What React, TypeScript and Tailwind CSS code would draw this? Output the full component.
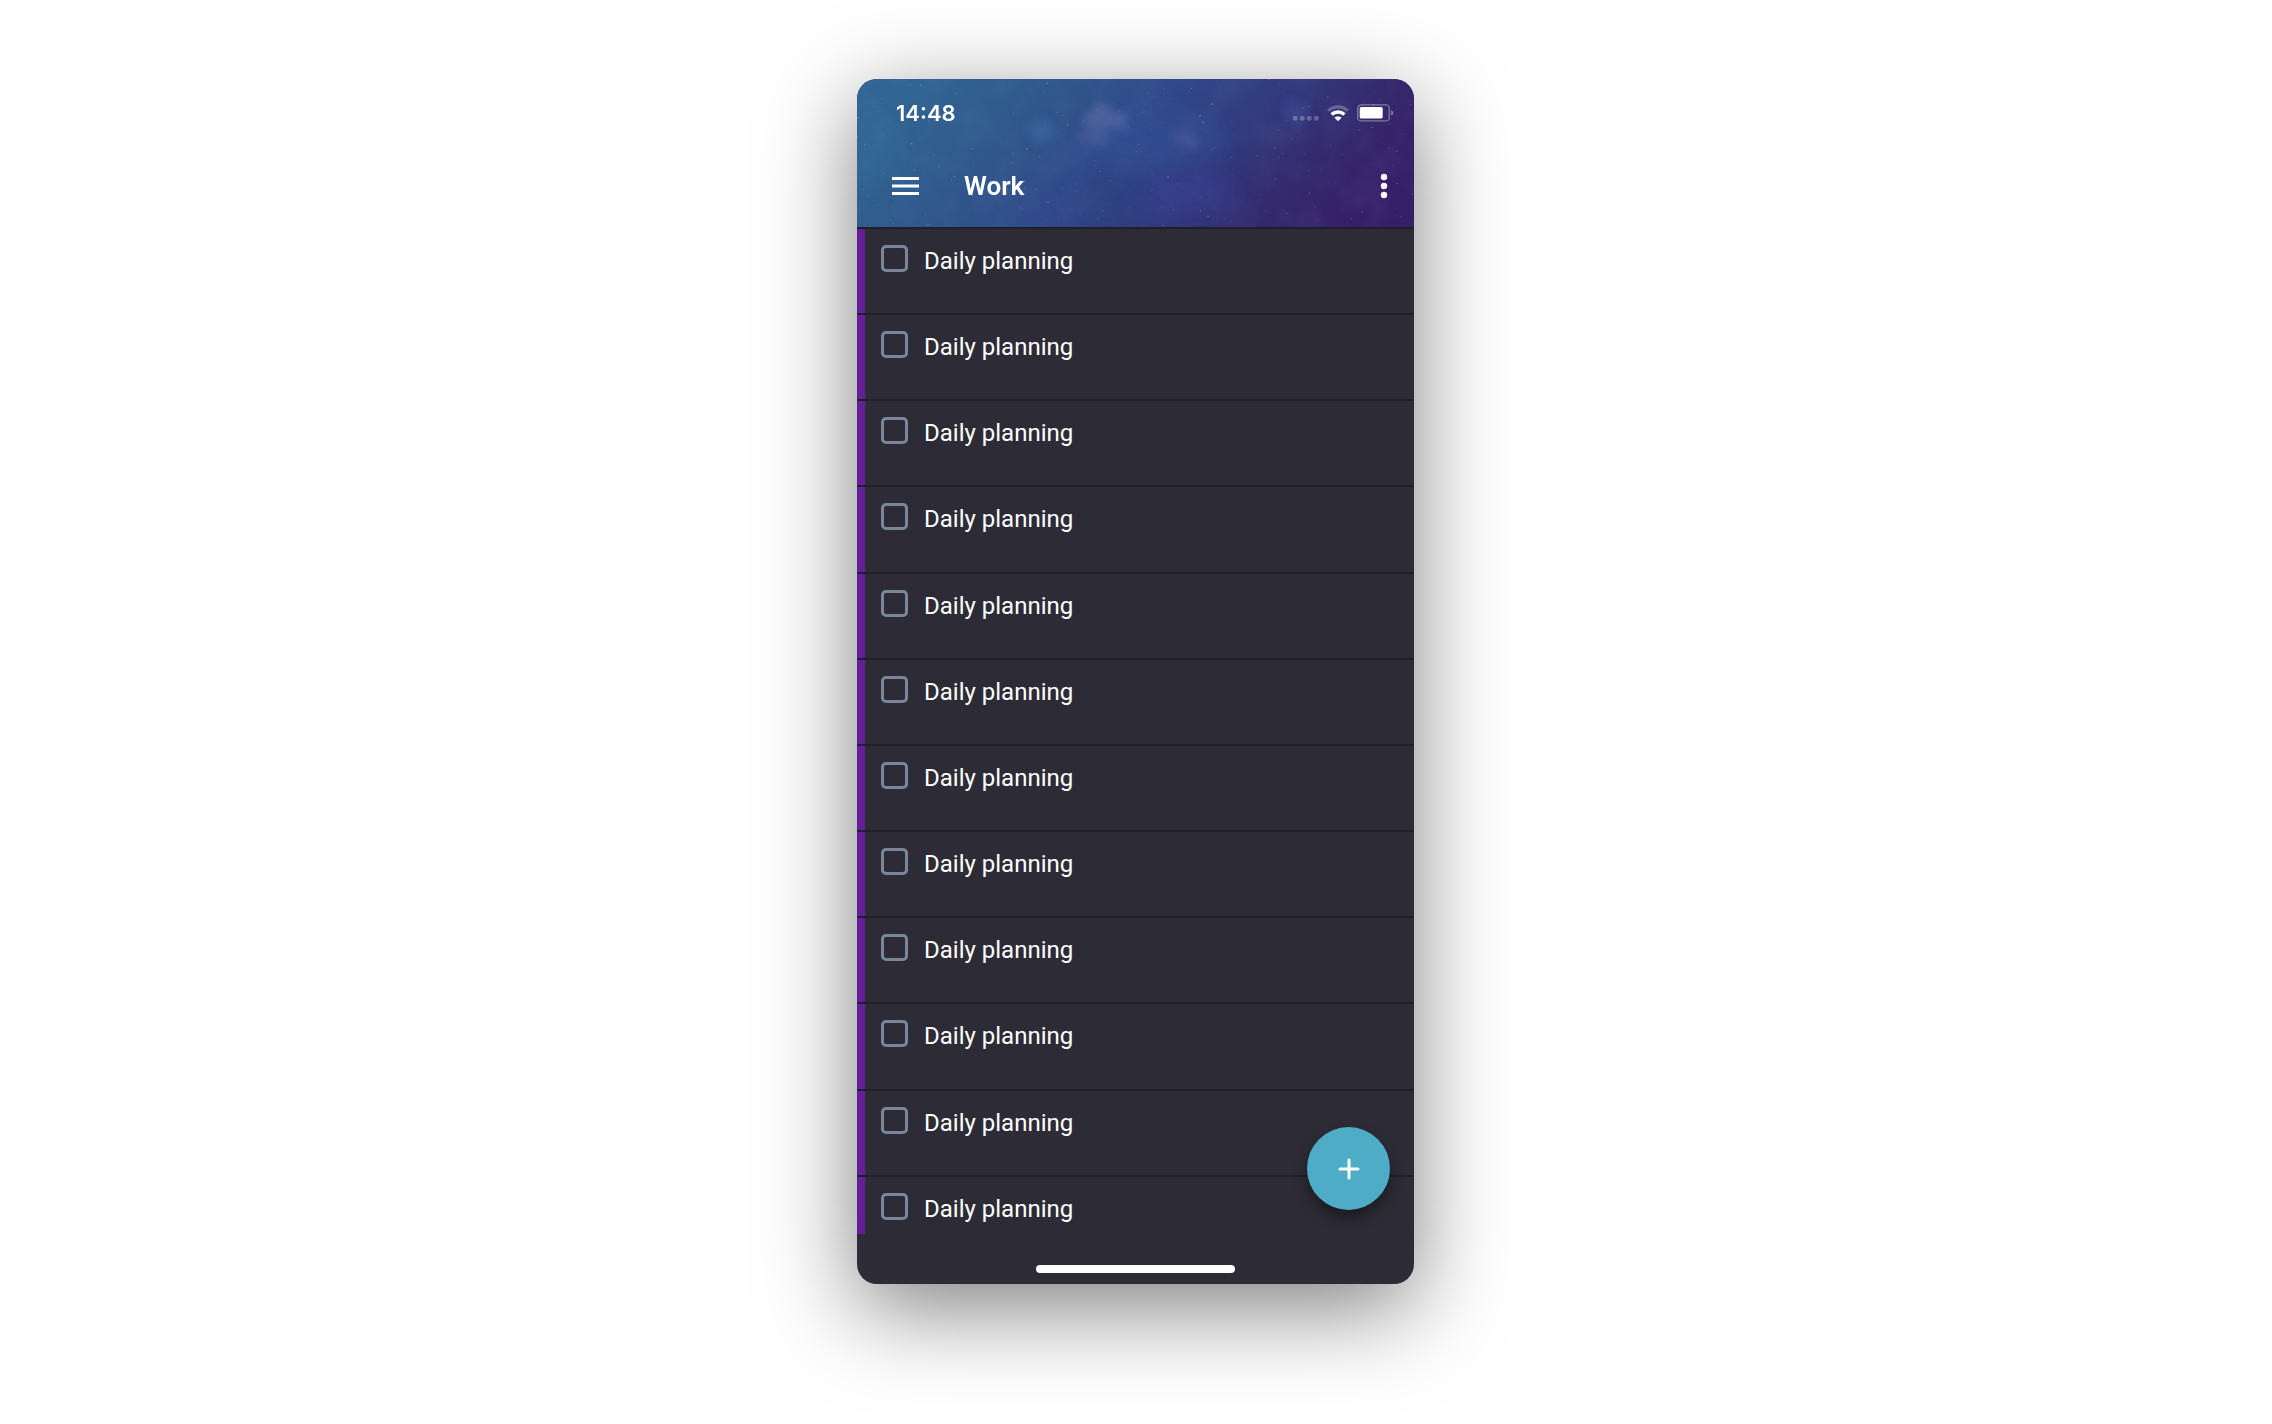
import { useState } from 'react'

type Task = { id: number; title: string; done: boolean }

const initialTasks: Task[] = Array.from({ length: 12 }, (_, i) => ({
  id: i + 1,
  title: 'Daily planning',
  done: false,
}))

// Fixed seed so the sky looks the same on every render
function makeStars(count: number) {
  let seed = 41
  const next = () => {
    seed = (seed * 16807) % 2147483647
    return seed / 2147483647
  }
  return Array.from({ length: count }, () => ({
    x: next() * 558,
    y: next() * 148,
    r: 0.4 + next() * 0.5,
    o: 0.08 + next() * next() * 0.45,
  }))
}

const stars = makeStars(330)

function NightSky() {
  return (
    <svg className="absolute inset-0 w-full h-full" viewBox="0 0 558 148" preserveAspectRatio="none" aria-hidden="true">
      <defs>
        <linearGradient id="sky" x1="0" y1="0.3" x2="1" y2="0.55">
          <stop offset="0" stopColor="#316694" />
          <stop offset="0.22" stopColor="#305b8d" />
          <stop offset="0.45" stopColor="#314b8a" />
          <stop offset="0.66" stopColor="#323b7e" />
          <stop offset="0.83" stopColor="#352a6e" />
          <stop offset="1" stopColor="#371e68" />
        </linearGradient>
        <filter id="soft" x="-50%" y="-50%" width="200%" height="200%">
          <feGaussianBlur stdDeviation="10" />
        </filter>
        <filter id="wisp" x="-60%" y="-60%" width="220%" height="220%">
          <feTurbulence type="fractalNoise" baseFrequency="0.08" numOctaves="5" seed="5" result="n" />
          <feDisplacementMap in="SourceGraphic" in2="n" scale="30" xChannelSelector="R" yChannelSelector="G" />
          <feGaussianBlur stdDeviation="4" />
        </filter>
        <filter id="grain" x="0" y="0" width="100%" height="100%">
          <feTurbulence type="fractalNoise" baseFrequency="0.03" numOctaves="5" seed="3" />
          <feColorMatrix values="0 0 0 0 0.22  0 0 0 0 0.32  0 0 0 0 0.65  1.6 0 0 0 -0.6" />
        </filter>
      </defs>
      <rect width="558" height="148" fill="url(#sky)" />
      <rect width="558" height="148" filter="url(#grain)" opacity="0.1" />
      <g filter="url(#soft)">
        <ellipse cx="20" cy="75" rx="24" ry="30" fill="#3374a0" opacity="0.25" />
        <ellipse cx="300" cy="60" rx="70" ry="28" fill="#33569c" opacity="0.4" />
        <ellipse cx="330" cy="115" rx="50" ry="22" fill="#3a4294" opacity="0.4" />
        <ellipse cx="250" cy="115" rx="36" ry="18" fill="#2a3f7c" opacity="0.4" />
      </g>
      <g filter="url(#wisp)">
        <ellipse cx="250" cy="40" rx="20" ry="12" fill="#7a80b8" opacity="0.36" />
        <ellipse cx="236" cy="60" rx="18" ry="9" fill="#6670ad" opacity="0.34" />
        <ellipse cx="187" cy="53" rx="14" ry="9" fill="#4a86bd" opacity="0.3" />
        <ellipse cx="333" cy="60" rx="12" ry="5" fill="#6c6bb0" opacity="0.4" />
        <ellipse cx="440" cy="32" rx="16" ry="9" fill="#4458a4" opacity="0.4" />
      </g>
      <g fill="#a9c6ee">
        {stars.map((s, i) => (
          <circle key={i} cx={s.x} cy={s.y} r={s.r} opacity={s.o} />
        ))}
      </g>
    </svg>
  )
}

function StatusIcons() {
  return (
    <div className="flex items-center">
      <svg className="w-[26px] h-4 mr-2" viewBox="0 0 26 16" fill="#fff" fillOpacity="0.25" aria-label="No signal">
        <rect x="0" y="11" width="4.5" height="4.5" rx="1.2" />
        <rect x="7" y="11" width="4.5" height="4.5" rx="1.2" />
        <rect x="14" y="11" width="4.5" height="4.5" rx="1.2" />
        <rect x="21" y="11" width="4.5" height="4.5" rx="1.2" />
      </svg>
      <svg className="w-[22px] h-4 mr-2" viewBox="0 0 22 16" fill="none" stroke="#fff" aria-label="Wi-Fi">
        <path d="M1.2 5.6C6.8 0.5 15.2 0.5 20.8 5.6" strokeWidth="3.2" strokeOpacity="0.25" />
        <path d="M4.6 9.6C8.2 6.2 13.8 6.2 17.4 9.6" strokeWidth="3.4" />
        <path d="M11 16.2L7.4 12.8C9.4 11 12.6 11 14.6 12.8Z" fill="#fff" stroke="none" />
      </svg>
      <svg className="w-[37px] h-[18px]" viewBox="0 0 37 18" aria-label="Battery">
        <rect x="0.7" y="0.9" width="31.6" height="16" rx="3.5" fill="none" stroke="#fff" strokeOpacity="0.38" strokeWidth="1.3" />
        <rect x="2.7" y="3" width="23" height="11.6" rx="1.6" fill="#fff" />
        <path d="M34.2 6.2C36.8 7.2 36.8 10.6 34.2 11.6Z" fill="#fff" fillOpacity="0.42" />
      </svg>
    </div>
  )
}

function Header({ title }: { title: string }) {
  return (
    <header className="relative h-[150px] border-b-2 border-[#1f1f28] text-white">
      <NightSky />
      <div className="relative flex items-center justify-between pl-[39px] pr-5 pt-5">
        <span className="font-['Inter',sans-serif] text-[22px] leading-7 font-semibold">14:48</span>
        <StatusIcons />
      </div>
      <div className="relative flex items-center pl-[35px] pr-6 pt-11">
        <button aria-label="Open menu">
          <svg className="w-7 h-5" viewBox="0 0 28 20" fill="#fff">
            <rect x="0" y="1" width="27" height="3" />
            <rect x="0" y="8.5" width="27" height="3" />
            <rect x="0" y="16" width="27" height="3" />
          </svg>
        </button>
        <h1 className="flex-1 pl-11 text-[26px] leading-[30px] font-semibold">{title}</h1>
        <button aria-label="More options">
          <svg className="w-3 h-7" viewBox="0 0 12 28" fill="#fff">
            <circle cx="6" cy="5" r="3.2" />
            <circle cx="6" cy="14" r="3.2" />
            <circle cx="6" cy="23" r="3.2" />
          </svg>
        </button>
      </div>
    </header>
  )
}

function TaskRow({ task, onToggle }: { task: Task; onToggle: (id: number) => void }) {
  return (
    <li className="flex border-b-2 border-[#20202a]">
      <div className="w-2 bg-[#641f97]" />
      <label className="flex flex-1 items-start gap-4 pl-4 pt-4 text-2xl text-white">
        <input
          type="checkbox"
          checked={task.done}
          onChange={() => onToggle(task.id)}
          className="appearance-none w-[27px] h-[27px] rounded-[5px] border-3 border-[#78879a] checked:bg-[#78879a]"
        />
        <span>{task.title}</span>
      </label>
    </li>
  )
}

export default function App() {
  const [tasks, setTasks] = useState<Task[]>(initialTasks)

  function handleToggle(id: number) {
    setTasks(tasks.map(t => (t.id === id ? { ...t, done: !t.done } : t)))
  }

  function handleAdd() {
    setTasks([...tasks, { id: tasks.length + 1, title: 'Daily planning', done: false }])
  }

  return (
    <div className="min-h-screen bg-white pl-4 pr-[17px] pt-[79px] pb-[140px] font-['Roboto',sans-serif]">
      <main className="relative mx-auto w-full max-w-[557px] overflow-hidden rounded-[20px] bg-[#2d2c36] shadow-[0_24px_92px_rgba(0,0,0,0.5)]">
        <Header title="Work" />

        {/* The last row runs under the home indicator area */}
        <div className="h-[1005px] overflow-hidden">
          <ul className="grid h-[1034px] auto-rows-fr">
            {tasks.map(t => (
              <TaskRow key={t.id} task={t} onToggle={handleToggle} />
            ))}
          </ul>
        </div>

        <div className="flex h-[50px] items-end justify-center pb-[11px]">
          <div className="h-2 w-[199px] rounded-full bg-white" />
        </div>

        <button
          onClick={handleAdd}
          aria-label="Add task"
          className="absolute right-6 bottom-[74px] flex h-[83px] w-[83px] items-center justify-center rounded-full bg-[#4facc6] shadow-[0_8px_14px_rgba(0,0,0,0.4)]"
        >
          <svg className="w-6 h-6" viewBox="0 0 24 24" fill="none" stroke="#fff" strokeWidth={3} strokeLinecap="round">
            <path d="M12 3v18M3 12h18" />
          </svg>
        </button>
      </main>
    </div>
  )
}
